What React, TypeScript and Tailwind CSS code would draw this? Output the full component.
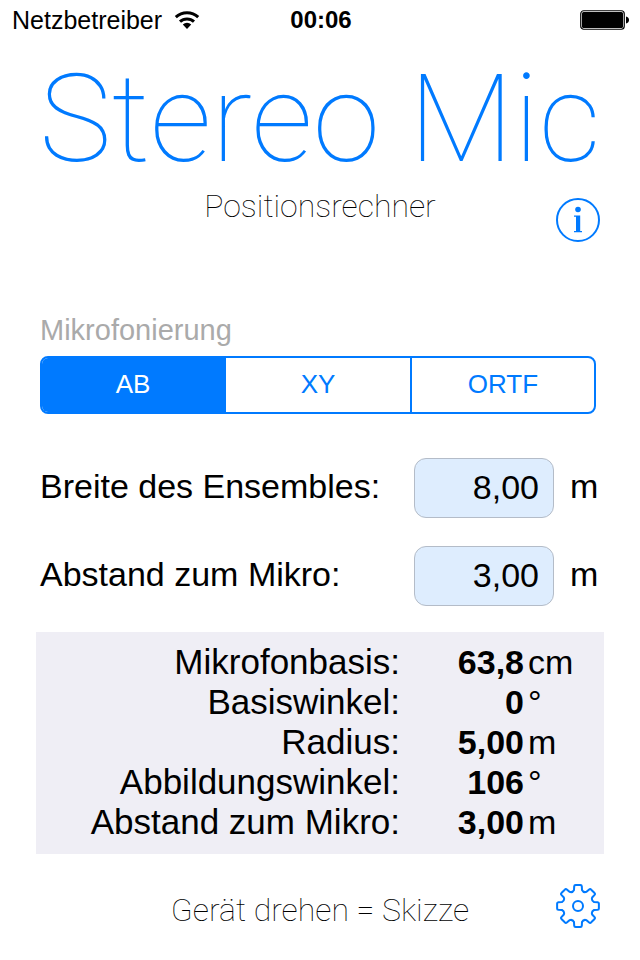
import { useState } from 'react'

const modes = ['AB', 'XY', 'ORTF']

const results = [
  { label: 'Mikrofonbasis:', value: '63,8', unit: 'cm' },
  { label: 'Basiswinkel:', value: '0', unit: '°' },
  { label: 'Radius:', value: '5,00', unit: 'm' },
  { label: 'Abbildungswinkel:', value: '106', unit: '°' },
  { label: 'Abstand zum Mikro:', value: '3,00', unit: 'm' },
]

// outline of an eight-toothed gear around (22, 22)
function gearPath(): string {
  const at = (r: number, deg: number) => {
    const a = (deg * Math.PI) / 180
    return `${(22 + r * Math.sin(a)).toFixed(2)} ${(22 - r * Math.cos(a)).toFixed(2)}`
  }
  let d = ''
  for (let i = 0; i < 8; i++) {
    const c = i * 45
    d += `${i === 0 ? 'M' : 'L'}${at(16.5, c - 14)} L${at(20, c - 11)} Q${at(21.3, c - 10)} ${at(21, c - 6)} `
    d += `L${at(21, c + 6)} Q${at(21.3, c + 10)} ${at(20, c + 11)} L${at(16.5, c + 14)} `
    d += `Q${at(14.2, c + 22.5)} ${at(16.5, c + 31)} `
  }
  return d + 'Z'
}

function StatusBar() {
  return (
    <header className="grid grid-cols-3 items-center h-10 pl-3 pr-2.5 text-2xl leading-10">
      <div className="flex items-center gap-3">
        <span className="text-[25px]">Netzbetreiber</span>
        <svg viewBox="0 0 26 20" className="w-[26px] h-5" aria-hidden="true">
          <g fill="none" stroke="black" strokeWidth="3">
            <path d="M1.8 7.2a16.400 16.400 0 0 1 22.400 0" />
            <path d="M6 11.700a10.300 10.300 0 0 1 14 0" />
          </g>
          <path d="M8.800 14.400a6.400 6.400 0 0 1 8.400 0L13 19z" />
        </svg>
      </div>
      <span className="text-center font-bold">00:06</span>
      <svg viewBox="0 0 50 20" className="w-[50px] h-5 justify-self-end" aria-hidden="true">
        <rect x="0.75" y="0.75" width="43.5" height="18.5" rx="3" fill="none" stroke="black" strokeWidth="1.2" />
        <rect x="2" y="2" width="41" height="16" rx="1.5" />
        <path d="M46 6.500c2 .3 3 1.600 3 3.500s-1 3.200-3 3.500z" />
      </svg>
    </header>
  )
}

function LengthField({ id, label, initial }: { id: string; label: string; initial: string }) {
  const [value, setValue] = useState(initial)
  return (
    <div className="flex items-center h-[60px]">
      <label htmlFor={id} className="flex-1 pb-1">{label}</label>
      <input
        id={id}
        type="text"
        inputMode="decimal"
        value={value}
        onChange={e => setValue(e.target.value)}
        className="w-[140px] h-[60px] px-3.5 pb-0.5 text-right bg-[#deedfe] border border-[#b4bcc8] rounded-xl outline-none"
      />
      <span className="w-[46px] pl-4 pb-1">m</span>
    </div>
  )
}

export default function App() {
  const [mode, setMode] = useState('AB')

  return (
    <div className="min-h-screen bg-white text-black font-['Liberation_Sans',Arial,sans-serif]">
      <StatusBar />

      <h1 className="mt-4 text-center text-[122px] leading-32 whitespace-nowrap font-thin text-[#007aff] font-['Roboto',sans-serif]">
        Stereo Mic
      </h1>

      <div className="grid grid-cols-[44px_1fr_44px] h-[58px] px-10">
        <p className="col-start-2 text-center text-[32px] leading-11 font-thin font-['Roboto',sans-serif]">Positionsrechner</p>
        <button className="self-end size-11 text-[#007aff]" aria-label="Info">
          <svg viewBox="0 0 44 44" fill="currentColor">
            <circle cx="22" cy="22" r="21" fill="none" stroke="currentColor" strokeWidth="2" />
            <circle cx="22" cy="11.500" r="2.800" />
            <path d="M18 17.500h6.200v15.500H26v1.200h-8V33h2V18.700h-2z" />
          </svg>
        </button>
      </div>

      <main>
        <section className="pl-10 pr-11 pt-[72px]">
          <h2 id="mode-label" className="text-[29px] leading-8 text-[#aaaaaa]">Mikrofonierung</h2>
          <div
            role="group"
            aria-labelledby="mode-label"
            className="grid grid-cols-[184fr_186fr_182fr] mt-2.5 h-[58px] text-[26px] border-2 border-[#007aff] rounded-lg overflow-hidden divide-x-2 divide-[#007aff]"
          >
            {modes.map(m => (
              <button
                key={m}
                aria-pressed={mode === m}
                onClick={() => setMode(m)}
                className={mode === m ? 'pb-0.5 bg-[#007aff] text-white' : 'pb-0.5 text-[#007aff]'}
              >
                {m}
              </button>
            ))}
          </div>
        </section>

        <section className="flex flex-col gap-7 pl-10 pr-10 mt-11 text-[34px] leading-10">
          <LengthField id="width" label="Breite des Ensembles:" initial="8,00" />
          <LengthField id="distance" label="Abstand zum Mikro:" initial="3,00" />
        </section>

        <section className="mx-9 mt-[26px] pt-2.5 pb-3 bg-[#efeef5]">
          <table className="w-full text-[34px] leading-10">
            <tbody>
              {results.map(r => (
                <tr key={r.label}>
                  <th scope="row" className="text-right text-[35px] font-normal">{r.label}</th>
                  <td className="w-[124px] text-right font-bold">{r.value}</td>
                  <td className="w-20 pl-1">{r.unit}</td>
                </tr>
              ))}
            </tbody>
          </table>
        </section>
      </main>

      <footer className="grid grid-cols-[44px_1fr_44px] items-start mt-[30px] px-10">
        <p className="col-start-2 pt-1 text-center text-[32px] leading-11 font-thin font-['Roboto',sans-serif]">
          Gerät drehen = Skizze
        </p>
        <button className="size-11 text-[#007aff]" aria-label="Einstellungen">
          <svg viewBox="0 0 44 44" fill="none" stroke="currentColor" strokeWidth="2" strokeLinejoin="round">
            <path d={gearPath()} />
            <circle cx="22" cy="22" r="5" />
          </svg>
        </button>
      </footer>
    </div>
  )
}
